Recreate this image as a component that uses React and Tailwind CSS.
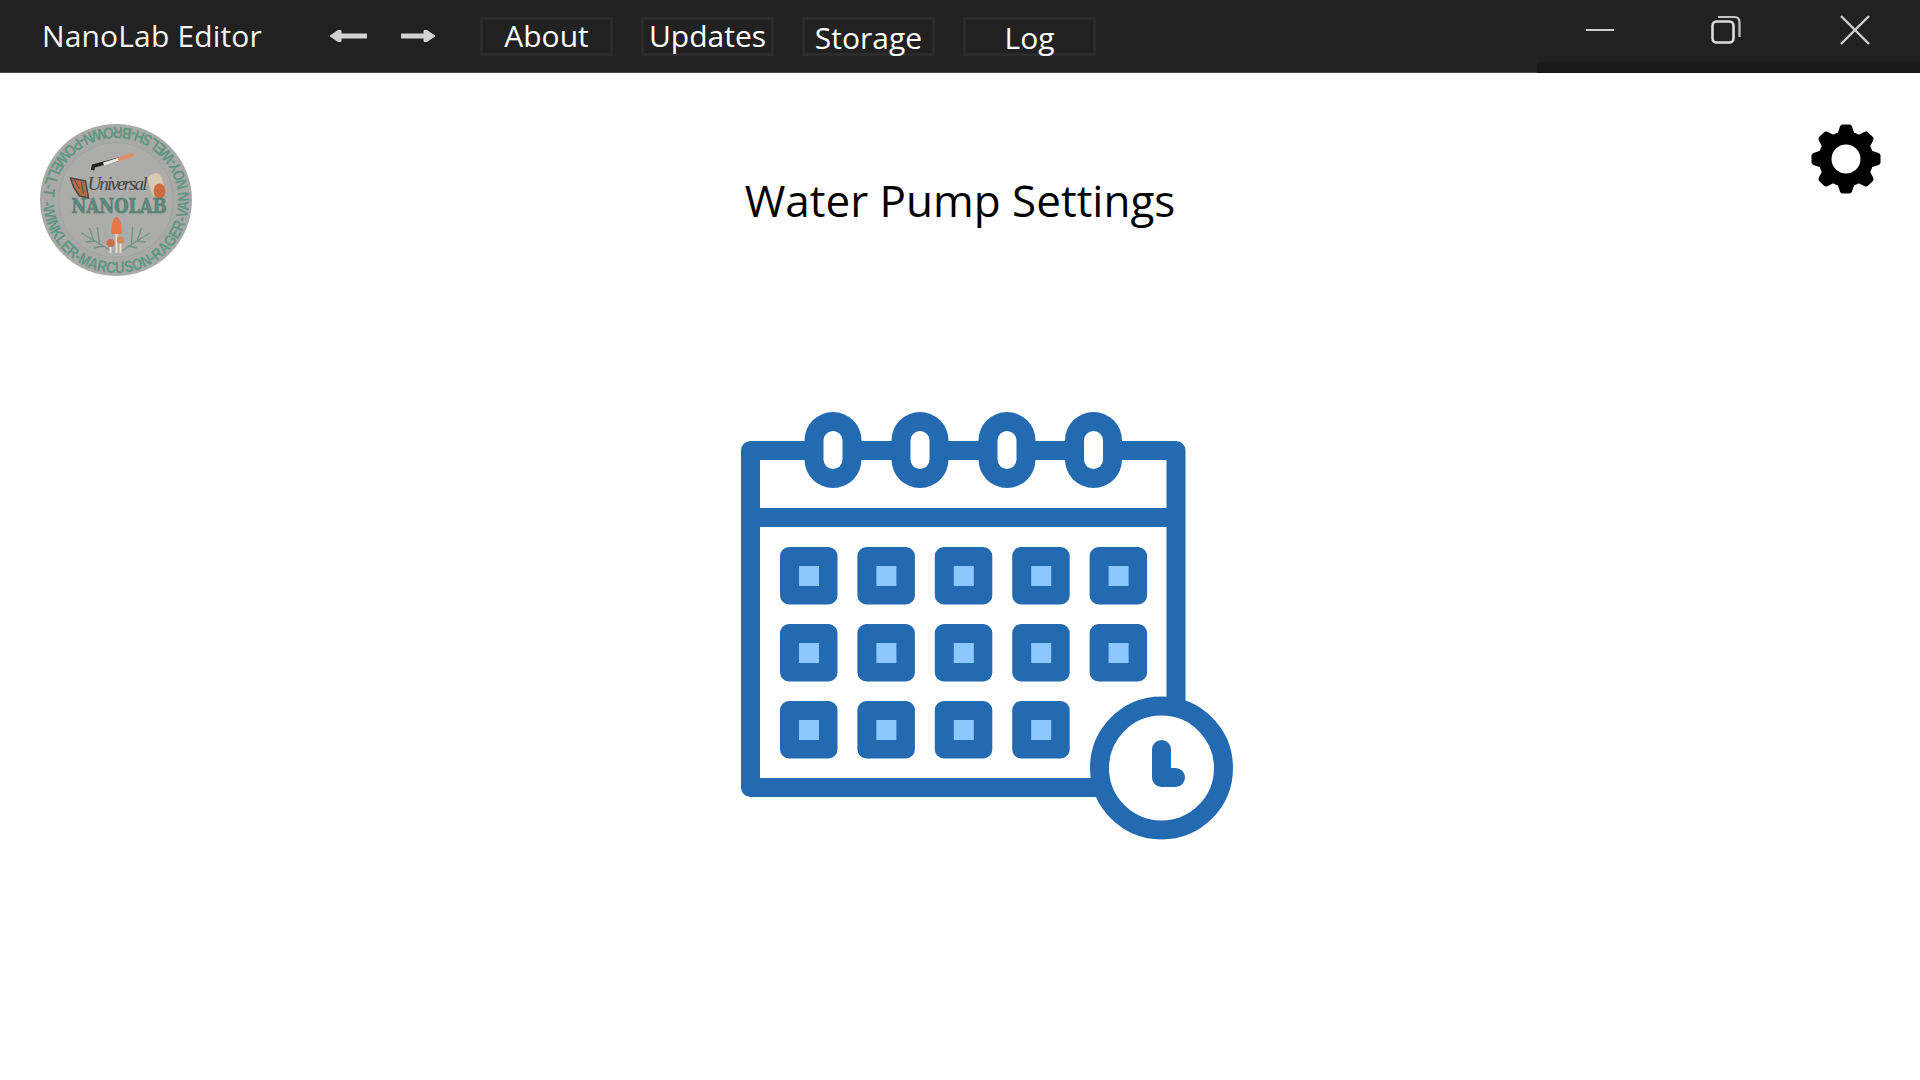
import React from "react";

const navItems = [
  { label: "About", nudge: "" },
  { label: "Updates", nudge: "" },
  { label: "Storage", nudge: "pt-[3px]" },
  { label: "Log", nudge: "pt-[3px]" },
];

const calendarRows = [
  [0, 1, 2, 3, 4],
  [0, 1, 2, 3, 4],
  [0, 1, 2, 3],
];

const blue = "#236ab0";

function ArrowLeft() {
  return (
    <svg width="38" height="16" viewBox="0 0 38 16">
      <path d="M12 8H37" stroke="#d2d2d2" strokeWidth="5" strokeLinecap="round" />
      <path d="M1 8L9 2.5H12V13.5H9Z" fill="#d2d2d2" stroke="#d2d2d2" strokeLinejoin="round" />
    </svg>
  );
}

function ArrowRight() {
  return (
    <svg width="35" height="16" viewBox="0 0 35 16">
      <path d="M1 8H24" stroke="#d2d2d2" strokeWidth="5" strokeLinecap="round" />
      <path d="M34 8L26 2.5H23V13.5H26Z" fill="#d2d2d2" stroke="#d2d2d2" strokeLinejoin="round" />
    </svg>
  );
}

function WindowControls() {
  return (
    <div className="flex items-center h-full pb-[12px]">
      <svg width="28" height="4" viewBox="0 0 28 4" className="mr-[97px]">
        <path d="M0 2H28" stroke="#cfcfcf" strokeWidth="2" />
      </svg>
      <svg width="30" height="30" viewBox="0 0 30 30" className="mr-[99px]">
        <rect x="1.5" y="6.5" width="21" height="21" rx="4" fill="none" stroke="#dcdcdc" strokeWidth="2.6" />
        <path d="M7 2H23.5C26.5 2 28.5 4 28.5 7V22" fill="none" stroke="#c4c4c4" strokeWidth="2.2" />
      </svg>
      <svg width="30" height="30" viewBox="0 0 30 30" className="mr-[50px]">
        <path d="M1 1L29 29M29 1L1 29" stroke="#cfcfcf" strokeWidth="2.4" />
      </svg>
    </div>
  );
}

function Logo() {
  return (
    <svg width="152" height="152" viewBox="20.5 14 152 152">
      <defs>
        <path id="ring" d="M23.5 90A73 73 0 1 0 169.5 90A73 73 0 1 0 23.5 90" />
      </defs>
      <circle cx="96.5" cy="90" r="76" fill="#a9a9a7" />
      <circle cx="96.5" cy="90" r="57.5" fill="#acacaa" stroke="#9ea4a1" strokeWidth="1" />
      <text fontFamily="'Liberation Sans', sans-serif" fontSize="16" fontWeight="700" fill="#5f9683">
        <textPath href="#ring" startOffset="2" textLength="452" lengthAdjust="spacingAndGlyphs">
          -WINKLER-MARCUSON-RAGER-VAN NOY-WELSH-BROWN-POWELL-T
        </textPath>
      </text>
      {/* dropper */}
      <path d="M73 60L74 56L100 49" fill="none" stroke="#222" strokeWidth="3.5" />
      <path d="M84 54L100 49" stroke="#e8e8e8" strokeWidth="3" />
      <path d="M100 49L113 45" stroke="#e68a63" strokeWidth="3.5" strokeLinecap="round" />
      {/* butterfly */}
      <path d="M51 68L66 71L69 88L60 86L54 77Z" fill="#b86a45" stroke="#4a4a4a" strokeWidth="1.5" />
      <path d="M55 70L60 79M62 72L64 84" stroke="#4a4a4a" strokeWidth="1" />
      {/* scroll */}
      <rect x="130" y="64" width="14" height="23" rx="5" fill="#d9c9b0" transform="rotate(-18 136 75)" />
      <ellipse cx="140" cy="81" rx="6" ry="7.5" fill="#cf6b3e" />
      <text x="68" y="80" fontFamily="'Liberation Serif', serif" fontStyle="italic" fontSize="19" fill="#454545" textLength="60">
        Universal
      </text>
      <text x="52" y="103" fontFamily="'DejaVu Serif', serif" fontWeight="700" fontSize="20" fill="#5e8a7d" stroke="#4c7468" strokeWidth="0.6" textLength="95" lengthAdjust="spacingAndGlyphs">
        NANOLAB
      </text>
      {/* ferns */}
      <g stroke="#6f9684" strokeWidth="1.4" fill="none">
        <path d="M62 123L92 141M70 118L74 130M78 117L80 135M66 132L76 131M74 138L84 136" />
        <path d="M130 123L102 141M122 118L118 130M113 117L112 135M126 132L116 131M118 138L108 136" />
      </g>
      {/* mushrooms */}
      <path d="M97 124V143M91 135V143M101 132V143" stroke="#e8dccb" strokeWidth="2" />
      <path d="M92 124C91 115 94 107 97 107C100 107 103 115 102 124Z" fill="#e8774a" />
      <circle cx="91" cy="133" r="4" fill="#c96f45" />
      <circle cx="101" cy="130" r="3.5" fill="#d98a54" />
    </svg>
  );
}

function Gear() {
  const teeth = [0, 45, 90, 135, 180, 225, 270, 315];
  return (
    <svg width="70" height="70" viewBox="-35 -35 70 70">
      {teeth.map((deg) => (
        <path key={deg} d="M-8.5 -25L-6 -32.5Q-5.2 -34.5 -3.5 -34.5H3.5Q5.2 -34.5 6 -32.5L8.5 -25Z" fill="#000" transform={`rotate(${deg})`} />
      ))}
      <circle r="27.5" fill="#000" />
      <circle r="14.5" fill="#fff" />
    </svg>
  );
}

function CalendarIcon() {
  return (
    <svg width="493" height="430" viewBox="0 0 493 430">
      <path d="M9.5 38.5H435V375.5H9.5Z" fill="none" stroke={blue} strokeWidth="19" strokeLinejoin="round" />
      <path d="M9.5 105.5H435" stroke={blue} strokeWidth="19" />
      {[92, 179, 266, 352.5].map((cx) => (
        <g key={cx}>
          <rect x={cx - 28.5} y="0" width="57" height="76" rx="28.5" fill={blue} />
          <rect x={cx - 9.5} y="19" width="19" height="38" rx="9.5" fill="#fff" />
        </g>
      ))}
      {calendarRows.map((row, r) =>
        row.map((c) => (
          <g key={`${r}-${c}`}>
            <rect x={39 + c * 77.4} y={135 + r * 77} width="57.5" height="57.5" rx="9" fill={blue} />
            <rect x={58 + c * 77.4} y={154 + r * 77} width="20" height="20" fill="#8cc8ff" />
          </g>
        ))
      )}
      <circle cx="420.5" cy="356" r="62" fill="#fff" stroke={blue} strokeWidth="19" />
      <path d="M420.5 337.5V365.5H434.5" fill="none" stroke={blue} strokeWidth="19" strokeLinecap="round" strokeLinejoin="round" />
    </svg>
  );
}

function App() {
  return (
    <div className="min-h-screen bg-white font-['Open_Sans',sans-serif]">
      {/* Title bar */}
      <header className="relative h-[73px] bg-[#212121] border-b border-[#4a4a4a] flex items-center justify-between text-white">
        <div className="flex items-center pl-[42px]">
          <span className="w-[287px] text-[30px] leading-none tracking-[0.15px] text-[#f4f4f4]">NanoLab Editor</span>
          <ArrowLeft />
          <span className="w-[34px]" />
          <ArrowRight />
          <nav className="flex gap-[28px] ml-[44px]">
            {navItems.map((item) => (
              <button
                key={item.label}
                className={`w-[133px] h-[39px] border-[3px] border-[#2b2b2b] text-[30px] leading-none flex items-center justify-center ${item.nudge}`}
              >
                {item.label}
              </button>
            ))}
          </nav>
        </div>
        <WindowControls />
        <div className="absolute right-0 bottom-[-1px] w-[383px] h-[11px] bg-[#1a1a1a]" />
      </header>

      {/* Main */}
      <main>
        <div className="grid grid-cols-[1fr_auto_1fr] items-start">
          <div className="pl-[40px] pt-[51px]">
            <Logo />
          </div>
          <h1 className="pt-[98px] text-[44px] leading-[58px] text-black">Water Pump Settings</h1>
          <div className="flex justify-end pr-[39px] pt-[51px]">
            <Gear />
          </div>
        </div>
        <div className="ml-[741px] mt-[136px]">
          <CalendarIcon />
        </div>
      </main>
    </div>
  );
}

export default App;
